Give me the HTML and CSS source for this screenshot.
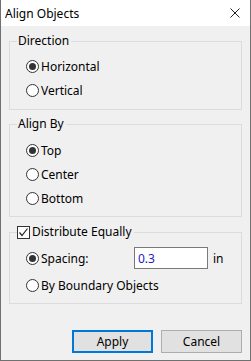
FILE: index.html
```html
<!DOCTYPE html>
<html>

<head>
  <meta charset="utf-8">
  <meta name="viewport" content="width=device-width">
  <title>Align Objects</title>
  <link rel="stylesheet" href="styles.css">
</head>

<body>
  <div class="window">
    <div class="titlebar">
      <span class="title">Align Objects</span>
      <svg class="close" width="10" height="10" viewBox="0 0 10 10">
        <path d="M0.5 0.5 L9.5 9.5 M9.5 0.5 L0.5 9.5" stroke="#222" stroke-width="1" fill="none" />
      </svg>
    </div>
    <div class="content">
      <fieldset class="group">
        <legend>Direction</legend>
        <label class="option"><span class="radio checked"></span>Horizontal</label>
        <label class="option"><span class="radio"></span>Vertical</label>
      </fieldset>

      <fieldset class="group align-group">
        <legend>Align By</legend>
        <label class="option"><span class="radio checked"></span>Top</label>
        <label class="option"><span class="radio"></span>Center</label>
        <label class="option"><span class="radio"></span>Bottom</label>
      </fieldset>

      <fieldset class="group dist-group">
        <legend class="check-legend"><span class="checkbox">
            <svg width="11" height="11" viewBox="0 0 11 11">
              <path d="M1.5 5.5 L4 8.5 L9.5 1.5" stroke="#222" stroke-width="1.2" fill="none" />
            </svg>
          </span>Distribute Equally</legend>
        <div class="option spacing-row">
          <label class="spacing-label"><span class="radio checked"></span>Spacing:</label>
          <input class="field" type="text" value="0.3">
          <span class="unit">in</span>
        </div>
        <label class="option"><span class="radio"></span>By Boundary Objects</label>
      </fieldset>

      <div class="buttons">
        <button class="btn default">Apply</button>
        <button class="btn">Cancel</button>
      </div>
    </div>
  </div>
</body>

</html>
```

FILE: styles.css
```css
/* Reset default styles */
body {
  margin: 0;
  padding: 0;
  background-color: #f0f0f0;
  font-family: "Noto Sans", Arial, sans-serif;
  font-size: 12px;
  color: #000000;
}

/* Dialog frame */
.window {
  width: 251px;
  height: 361px;
  box-sizing: border-box;
  border: 1px solid #707070;
  border-top: none;
  background-color: #f0f0f0;
}

.titlebar {
  height: 26px;
  background-color: #ffffff;
  display: flex;
  align-items: center;
  justify-content: space-between;
  padding: 0 10px 0 4px;
}

.title {
  font-size: 12px;
}

.content {
  padding: 0 8px;
}

/* Group boxes */
.group {
  margin: 8px 0 0 0;
  padding: 6px 0 7px 0;
  border: 1px solid #dcdcdc;
  min-width: 0;
}

.group legend {
  margin-left: 7px;
  padding: 0 2px 0 1px;
  line-height: 14px;
}

.align-group {
  margin-top: 7px;
  padding-top: 7px;
  padding-bottom: 6px;
}

.dist-group {
  margin-top: 8px;
  padding-top: 8px;
  padding-bottom: 6px;
}

.group .check-legend {
  display: flex;
  align-items: center;
  margin-left: 7px;
  padding: 0 2px 0 0;
}

/* Radio and check rows */
.option {
  display: flex;
  align-items: center;
  height: 24px;
  margin-left: 16px;
}

.radio {
  width: 13px;
  height: 13px;
  box-sizing: border-box;
  border: 1px solid #333333;
  border-radius: 50%;
  background-color: #ffffff;
  margin-right: 2px;
  display: flex;
  align-items: center;
  justify-content: center;
  flex-shrink: 0;
}

.radio.checked::after {
  content: "";
  width: 7px;
  height: 7px;
  border-radius: 50%;
  background-color: #333333;
}

.checkbox {
  width: 13px;
  height: 13px;
  box-sizing: border-box;
  border: 1px solid #333333;
  background-color: #ffffff;
  margin-right: 2px;
  display: flex;
  align-items: center;
  justify-content: center;
}

.spacing-row {
  height: 22px;
  margin-bottom: 4px;
}

.spacing-label {
  display: flex;
  align-items: center;
  width: 108px;
}

.field {
  width: 74px;
  height: 22px;
  box-sizing: border-box;
  border: 1px solid #7a7a7a;
  background-color: #ffffff;
  font-family: inherit;
  font-size: 12px;
  color: #1a1acc;
  padding: 0 0 0 3px;
  margin: 0;
}

.unit {
  margin-left: 5px;
}

/* Bottom buttons */
.buttons {
  display: flex;
  justify-content: flex-end;
  gap: 8px;
  margin-top: 26px;
}

.btn {
  width: 81px;
  height: 23px;
  box-sizing: border-box;
  background-color: #e1e1e1;
  border: 1px solid #adadad;
  font-family: inherit;
  font-size: 12px;
  color: #000000;
  padding: 0;
}

.btn.default {
  border: 2px solid #0078d7;
}
```
